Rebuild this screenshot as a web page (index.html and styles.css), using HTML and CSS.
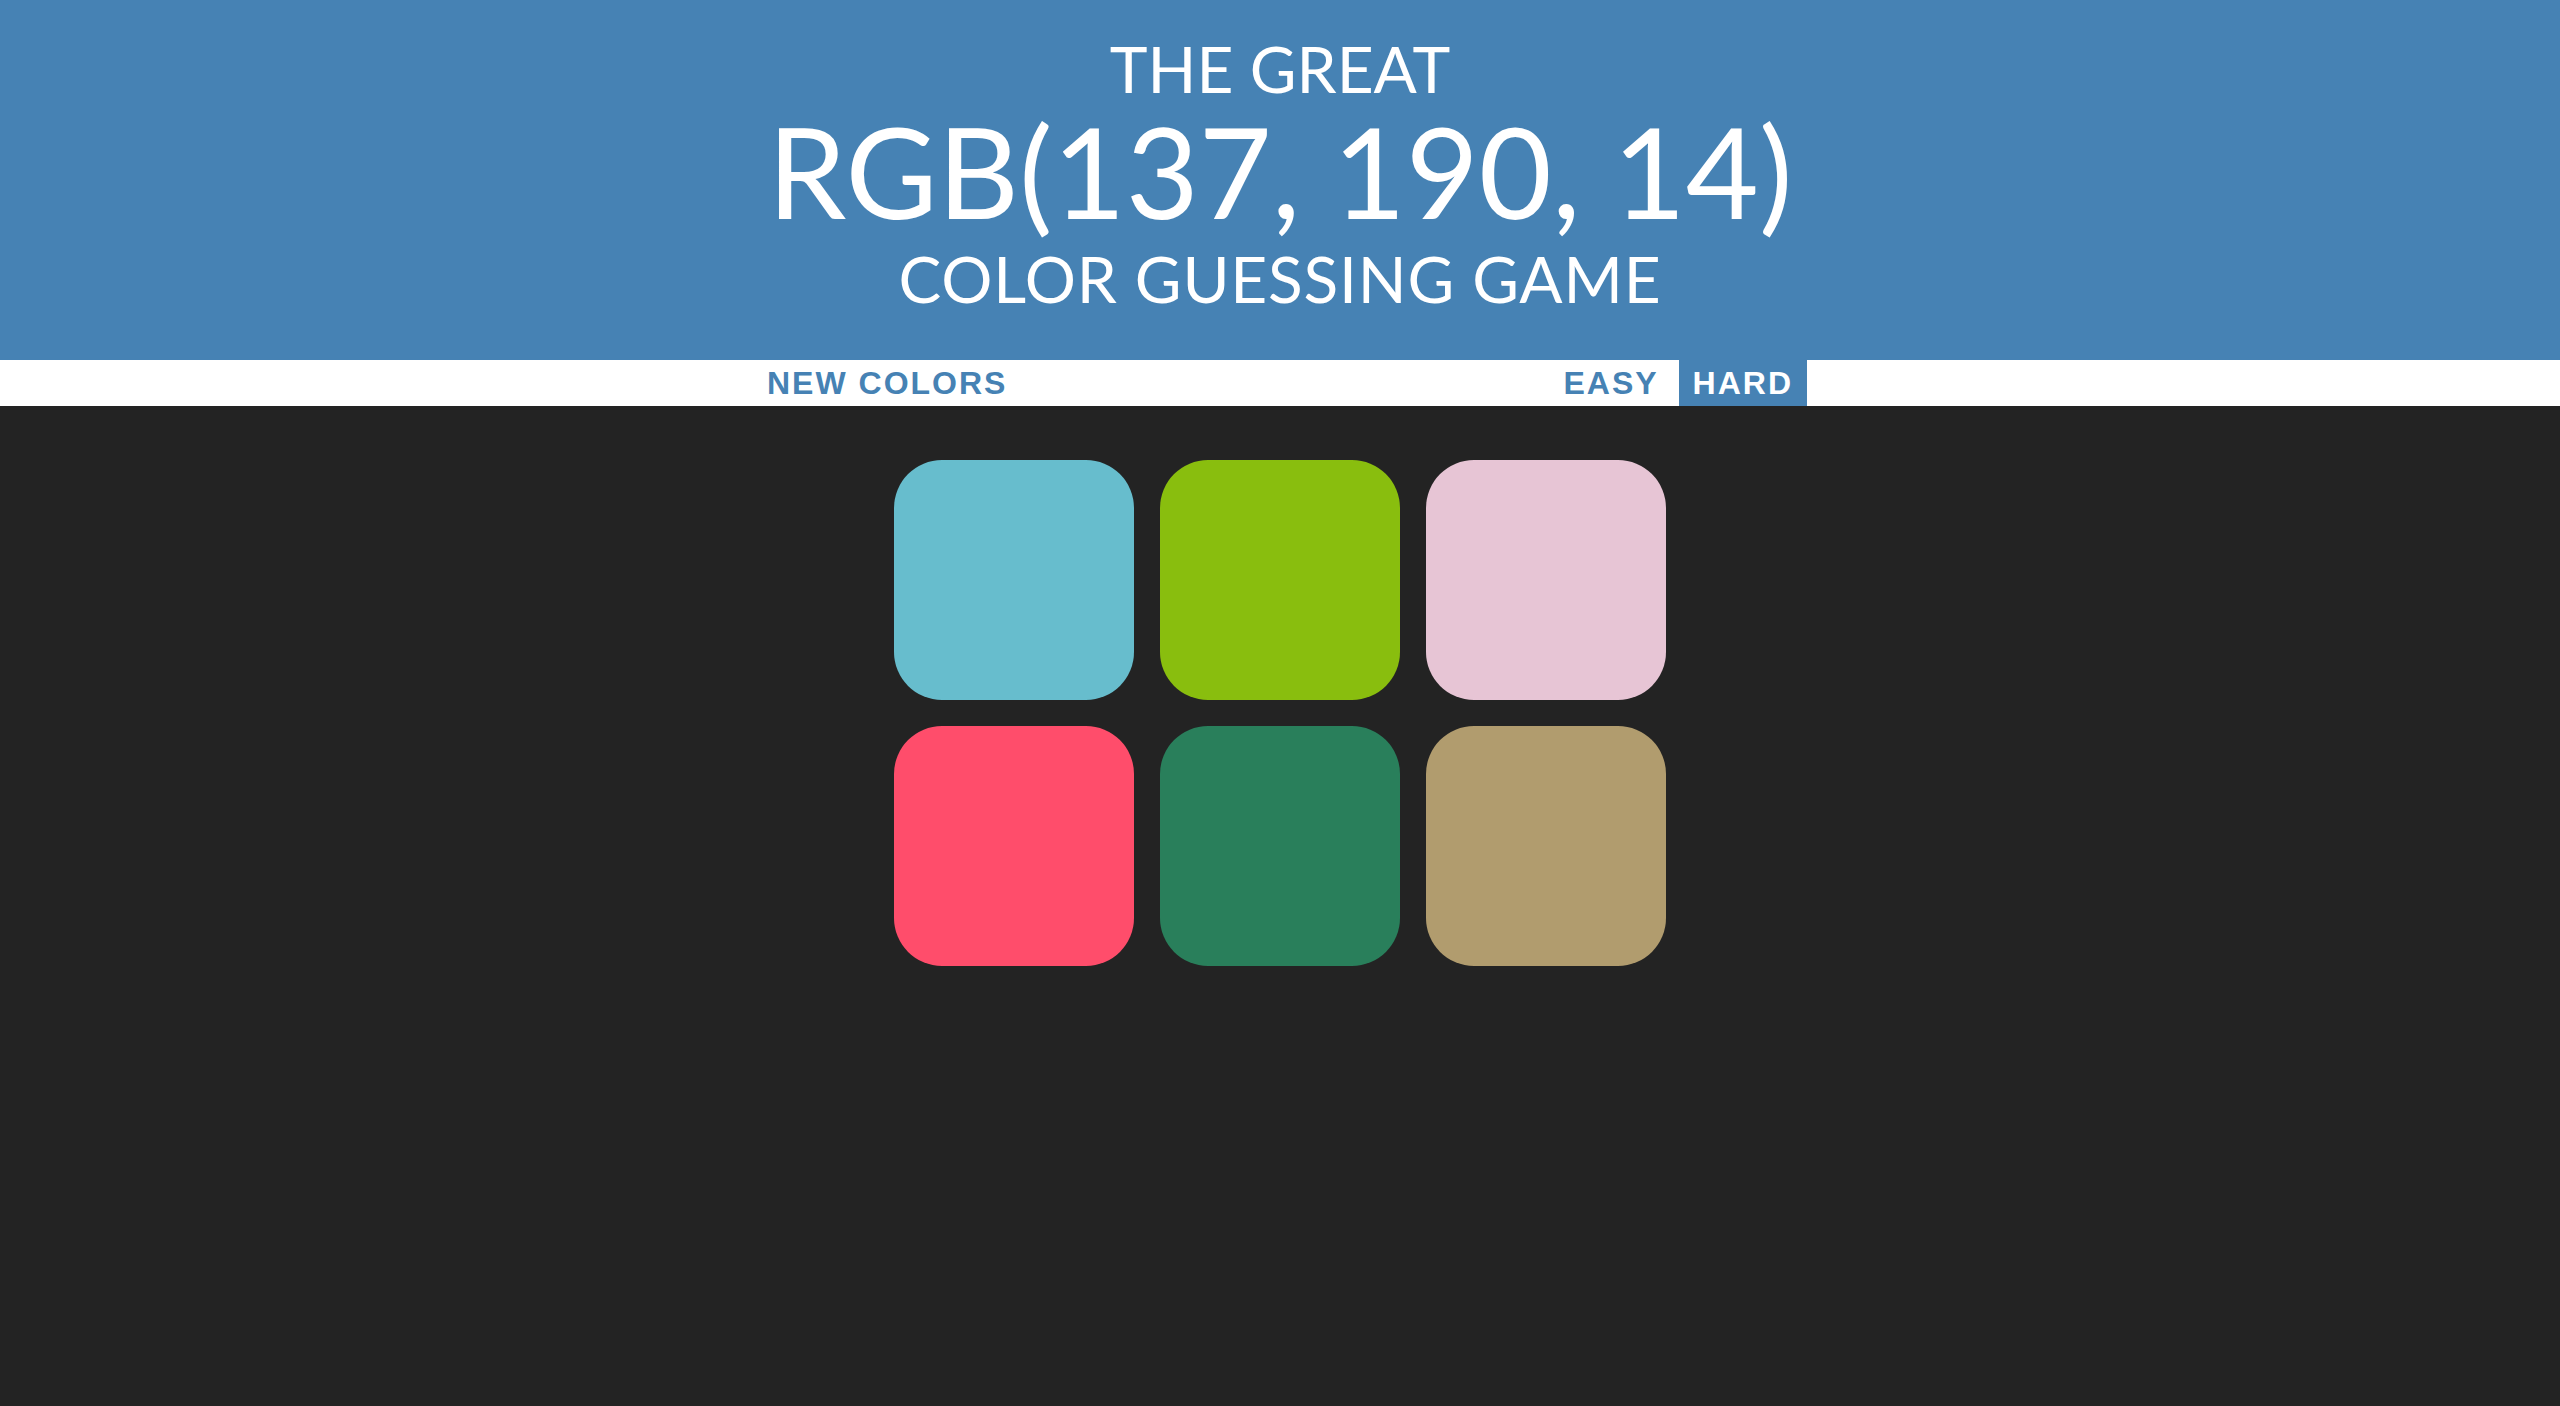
FILE: index.html
```html
<!DOCTYPE html>
<html lang="en">
<head>
<meta charset="utf-8">
<title>Color Game</title>
<link rel="stylesheet" href="styles.css">
</head>
<body>
<header class="header">
  <h1 class="title">
    <span class="title-small">The Great</span>
    <span class="title-big">RGB(137, 190, 14)</span>
    <span class="title-small title-last">Color Guessing Game</span>
  </h1>
</header>
<div class="stripe">
  <button class="btn">New Colors</button>
  <span class="message"></span>
  <button class="btn btn-easy">Easy</button>
  <button class="btn btn-selected">Hard</button>
</div>
<main class="board">
  <div class="square sq-1"></div>
  <div class="square sq-2"></div>
  <div class="square sq-3"></div>
  <div class="square sq-4"></div>
  <div class="square sq-5"></div>
  <div class="square sq-6"></div>
</main>
</body>
</html>
```
FILE: styles.css
```css
html, body {
  margin: 0;
  padding: 0;
}
body {
  background: #232323;
  min-height: 100vh;
  font-family: "Lato", "Liberation Sans", sans-serif;
}
.header {
  background: #4682b4;
  height: 360px;
  box-sizing: border-box;
  padding-top: 37px;
}
.title {
  margin: 0;
  color: #ffffff;
  font-weight: 400;
  text-transform: uppercase;
  text-align: center;
  display: flex;
  flex-direction: column;
  align-items: center;
}
.title-small {
  font-size: 64px;
  line-height: 64px;
}
.title-big {
  font-size: 126px;
  line-height: 126px;
  margin-top: 7px;
}
.title-last {
  margin-top: 13px;
  letter-spacing: 0.8px;
}
.stripe {
  background: #ffffff;
  height: 46px;
  display: flex;
  justify-content: center;
  align-items: stretch;
}
.btn {
  border: none;
  background: none;
  margin: 0;
  padding: 0 14px;
  height: 100%;
  font-family: "Liberation Sans", Arial, sans-serif;
  font-weight: 700;
  font-size: 32px;
  letter-spacing: 2px;
  text-transform: uppercase;
  color: #4682b4;
  cursor: pointer;
}
.btn-easy {
  padding-right: 20px;
}
.btn-selected {
  background: #4682b4;
  color: #ffffff;
}
.message {
  width: 528px;
}
.board {
  display: grid;
  grid-template-columns: repeat(3, 240px);
  gap: 26px;
  justify-content: center;
  padding-top: 54px;
}
.square {
  width: 240px;
  height: 240px;
  border-radius: 48px;
}
.sq-1 { background: #67bdcd; }
.sq-2 { background: #89be0e; }
.sq-3 { background: #e7c5d5; }
.sq-4 { background: #ff4d6b; }
.sq-5 { background: #297f5b; }
.sq-6 { background: #b19c6e; }
```
